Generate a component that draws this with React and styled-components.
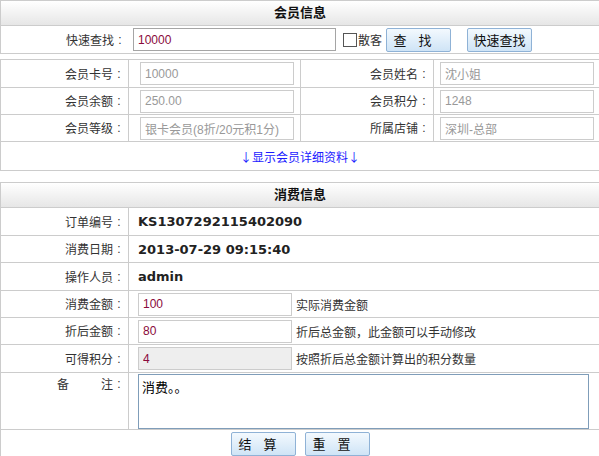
import React from 'react'
import styled, { createGlobalStyle } from 'styled-components'

const GlobalStyle = createGlobalStyle`
  html, body { margin: 0; padding: 0; background: #fff; }
  body {
    font-family: "Liberation Sans", Arial, "Noto Sans CJK SC", sans-serif;
    font-size: 12px;
    color: #333;
  }
`

const Page = styled.div`
  width: 600px;
  display: flex;
  flex-direction: column;
`

const Panel = styled.div`
  border: 1px solid #ccc;
  margin-top: ${p => p.$gap || 0}px;
`

const Header = styled.div`
  height: 24px;
  line-height: 24px;
  text-align: center;
  font-weight: bold;
  font-size: 13px;
  color: #111;
  background: linear-gradient(#ffffff, #e6e6e6);
`

const Row = styled.div`
  display: grid;
  grid-template-columns: ${p => p.$cols || '128px 1fr'};
  border-top: ${p => (p.$first ? 'none' : '1px solid #ccc')};
  height: ${p => p.$h || 26}px;
  overflow: hidden;
`

const Label = styled.div`
  display: flex;
  align-items: ${p => (p.$top ? 'flex-start' : 'center')};
  justify-content: flex-end;
  padding-right: 3px;
  padding-top: ${p => (p.$top ? 3 : 0)}px;
  line-height: 16px;
  border-right: ${p => (p.$line ? '1px solid #ccc' : 'none')};
  font-family: "Noto Sans CJK SC", sans-serif;
  font-size: 12px;
  color: #333;
`

const Colon = styled.span`
  display: inline-block;
  width: 12px;
  text-align: center;
  font-family: "Liberation Sans", Arial, sans-serif;
  font-size: 12px;
`

const Cell = styled.div`
  display: flex;
  align-items: ${p => (p.$top ? 'flex-start' : 'center')};
  gap: ${p => p.$gap || 0}px;
  padding-left: ${p => p.$pl ?? 9}px;
  border-right: ${p => (p.$line ? '1px solid #ccc' : 'none')};
`

const Field = styled.input`
  box-sizing: border-box;
  width: ${p => p.$w || 154}px;
  height: 23px;
  border: 1px solid ${p => (p.$dark ? '#a5a5a5' : '#ccc')};
  padding: 0 0 0 4px;
  font-family: "Liberation Sans", Arial, "Noto Sans CJK SC", sans-serif;
  font-size: 12px;
  color: ${p => (p.$muted ? '#999' : '#8a0a3c')};
  background: ${p => (p.$grey ? '#eee' : '#fff')};
  outline: none;
`

const Check = styled.label`
  display: flex;
  align-items: center;
  font-family: "Noto Sans CJK SC", sans-serif;
  font-size: 12px;
  color: #333;
  margin-left: 7px;
  span.box {
    width: 12px;
    height: 12px;
    border: 1px solid #555;
    background: #fff;
    margin-right: 1px;
  }
`

const Button = styled.button`
  box-sizing: border-box;
  height: 24px;
  width: ${p => p.$w || 65}px;
  margin-left: ${p => p.$ml || 0}px;
  padding: 0;
  border: 1px solid #8fb2d6;
  border-radius: 2px;
  background: linear-gradient(#f3f9fe, #cfe4f6);
  font-family: "Noto Sans CJK SC", sans-serif;
  font-size: 13px;
  line-height: 20px;
  color: #111;
  letter-spacing: ${p => p.$ls || 0}px;
`

const LinkRow = styled.div`
  border-top: 1px solid #ccc;
  height: 28px;
  display: flex;
  align-items: center;
  justify-content: center;
  a {
    color: #1a1aff;
    text-decoration: none;
    font-family: "Noto Sans CJK SC", sans-serif;
    font-size: 12px;
  }
`

const Value = styled.span`
  font-family: "DejaVu Sans", Verdana, sans-serif;
  font-weight: bold;
  font-size: 13px;
  color: #222;
`

const Hint = styled.span`
  font-family: "Noto Sans CJK SC", sans-serif;
  font-size: 12px;
  color: #333;
`

const Area = styled.textarea`
  box-sizing: border-box;
  width: 451px;
  height: 55px;
  margin: 1px 0 0 0;
  border: 1px solid #7f9db9;
  padding: 2px 3px;
  resize: none;
  overflow-y: scroll;
  font-family: "Noto Sans CJK SC", sans-serif;
  font-size: 13px;
  color: #000;
  outline: none;
`

const Gap = styled.span`
  display: inline-block;
  width: ${p => p.$w}px;
`

const Actions = styled.div`
  border-top: 1px solid #ccc;
  height: 27px;
  display: flex;
  align-items: center;
  justify-content: center;
  gap: 9px;
  padding-left: 1px;
`

const quad = '128px 172px 133px 1fr'

const L = ({ children, ...rest }) => (
  <Label {...rest}>{children}<Colon>:</Colon></Label>
)

export default function App() {
  return (
    <Page>
      <GlobalStyle />
      <Panel>
        <Header>会员信息</Header>
        <Row $h={27}>
          <L>快速查找</L>
          <Cell $pl={4}>
            <Field $w={203} $dark defaultValue="10000" />
            <Check><span className="box" />散客</Check>
            <Button $ml={4} $ls={12}>查找</Button>
            <Button $ml={16}>快速查找</Button>
          </Cell>
        </Row>
      </Panel>

      <Panel $gap={5}>
        <Row $cols={quad} $first $h={27}>
          <L $line>会员卡号</L>
          <Cell $line $pl={11}><Field $muted defaultValue="10000" /></Cell>
          <L $line>会员姓名</L>
          <Cell $pl={6}><Field $muted defaultValue="沈小姐" /></Cell>
        </Row>
        <Row $cols={quad}>
          <L $line>会员余额</L>
          <Cell $line $pl={11}><Field $muted defaultValue="250.00" /></Cell>
          <L $line>会员积分</L>
          <Cell $pl={6}><Field $muted defaultValue="1248" /></Cell>
        </Row>
        <Row $cols={quad}>
          <L $line>会员等级</L>
          <Cell $line $pl={11}><Field $muted defaultValue="银卡会员(8折/20元积1分)" /></Cell>
          <L $line>所属店铺</L>
          <Cell $pl={6}><Field $muted defaultValue="深圳-总部" /></Cell>
        </Row>
        <LinkRow><a href="#detail">↓显示会员详细资料↓</a></LinkRow>
      </Panel>

      <Panel $gap={11}>
        <Header>消费信息</Header>
        <Row $h={27}>
          <L $line>订单编号</L>
          <Cell><Value>KS1307292115402090</Value></Cell>
        </Row>
        <Row>
          <L $line>消费日期</L>
          <Cell><Value>2013-07-29 09:15:40</Value></Cell>
        </Row>
        <Row $h={27}>
          <L $line>操作人员</L>
          <Cell><Value>admin</Value></Cell>
        </Row>
        <Row>
          <L $line>消费金额</L>
          <Cell $gap={4}><Field defaultValue="100" /><Hint>实际消费金额</Hint></Cell>
        </Row>
        <Row>
          <L $line>折后金额</L>
          <Cell $gap={4}><Field defaultValue="80" /><Hint>折后总金额，此金额可以手动修改</Hint></Cell>
        </Row>
        <Row $h={27}>
          <L $line>可得积分</L>
          <Cell $gap={4}><Field $grey readOnly defaultValue="4" /><Hint>按照折后总金额计算出的积分数量</Hint></Cell>
        </Row>
        <Row $h={56}>
          <L $line $top>备<Gap $w={32} />注</L>
          <Cell $top>
            <Area defaultValue="消费。。" />
          </Cell>
        </Row>
        <Actions>
          <Button $ls={12}>结算</Button>
          <Button $ls={12}>重置</Button>
        </Actions>
      </Panel>
    </Page>
  )
}
